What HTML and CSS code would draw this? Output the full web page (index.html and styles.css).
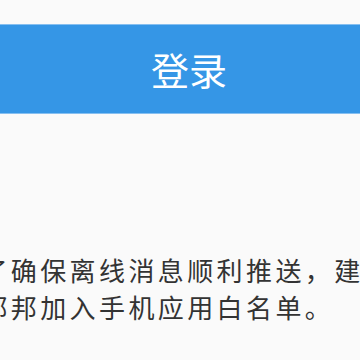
FILE: index.html
```html
<!DOCTYPE html>
<html lang="zh-CN">
<head>
<meta charset="utf-8">
<link rel="stylesheet" href="styles.css">
</head>
<body>
<div class="page">
  <button class="login-btn">登录</button>
  <p class="notice">为了确保离线消息顺利推送，建议将邮邦加入手机应用白名单。</p>
</div>
</body>
</html>
```
FILE: styles.css
```css
html, body {
  margin: 0;
  padding: 0;
  background: #fafafa;
  overflow: hidden;
}
.page {
  display: flex;
  flex-direction: column;
  box-sizing: border-box;
  padding-top: 24px;
  width: 360px;
  height: 360px;
  overflow: hidden;
  font-family: "Noto Sans CJK SC", "Noto Sans", sans-serif;
}
.login-btn {
  display: block;
  width: 100%;
  height: 90px;
  margin: 0;
  padding: 0 0 0 18px;
  border: none;
  border-top: 1px solid #86bff0;
  border-bottom: 1px solid #86bff0;
  background: #3596e6;
  color: #ffffff;
  font-family: "Noto Sans CJK SC", "Noto Sans", sans-serif;
  font-size: 38px;
  line-height: 1;
}
.notice {
  margin: 137px 0 0 -48px;
  width: 442px;
  flex: none;
  font-size: 26px;
  letter-spacing: 3.4px;
  line-height: 37px;
  color: #333333;
}
```
